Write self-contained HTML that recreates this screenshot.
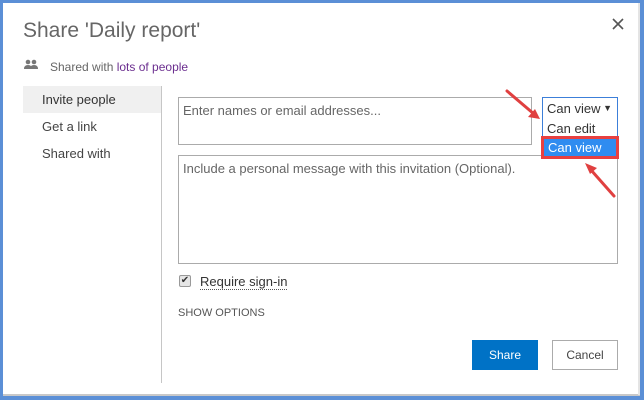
<!DOCTYPE html>
<html><head><style>
*{margin:0;padding:0;box-sizing:border-box}
body{width:644px;height:400px;overflow:hidden;background:#fff;font-family:"Liberation Sans",sans-serif;position:relative}
.a{position:absolute}
.t{color:#444;font-size:13px}
</style></head><body>
<div class="a" style="left:0;top:0;width:644px;height:400px;border:3px solid #5b8fd6;border-right-width:4px;border-bottom-width:4px"></div>
<div class="a" style="left:3px;top:394px;width:637px;height:2px;background:#c8c8c8"></div>
<div class="a" style="left:638px;top:3px;width:2px;height:392px;background:#e4e4e4"></div>
<div class="a" style="left:23px;top:19px;font-size:21px;color:#666">Share 'Daily report'</div>
<svg class="a" style="left:612px;top:18px" width="12" height="12"><path d="M1 1L11 11M11 1L1 11" stroke="#555" stroke-width="1.6"/></svg>
<svg class="a" style="left:24px;top:59px" width="14" height="11"><circle cx="4" cy="3" r="2.3" fill="#777"/><circle cx="10" cy="3" r="2.3" fill="#777"/><path d="M0 10Q0 6 4 6Q8 6 8 10ZM6 10Q6 6 10 6Q14 6 14 10Z" fill="#777"/></svg>
<div class="a" style="left:50px;top:60px;font-size:12px;color:#666">Shared with <span style="color:#6b2e8f">lots of people</span></div>
<div class="a" style="left:23px;top:86px;width:138px;height:27px;background:#f0f0f0"></div>
<div class="a" style="left:161px;top:86px;width:1px;height:297px;background:#c6c6c6"></div>
<div class="a t" style="left:42px;top:92px;font-size:13px;color:#333">Invite people</div>
<div class="a t" style="left:42px;top:119px">Get a link</div>
<div class="a t" style="left:42px;top:146px">Shared with</div>
<div class="a" style="left:178px;top:97px;width:354px;height:48px;border:1px solid #ababab"></div>
<div class="a t" style="left:183px;top:103px;color:#666">Enter names or email addresses...</div>
<div class="a" style="left:542px;top:97px;width:76px;height:23px;border:1px solid #3c7fd9;font-size:13px;color:#333;padding:3px 0 0 4px">Can view <span style="font-size:9px;position:absolute;right:5px;top:5px">▼</span></div>
<div class="a" style="left:542px;top:119px;width:76px;height:40px;border:1px solid #3c7fd9;border-top:none;background:#fff"></div>
<div class="a t" style="left:547px;top:121px;color:#333">Can edit</div>
<div class="a" style="left:178px;top:155px;width:440px;height:109px;border:1px solid #ababab"></div>
<div class="a" style="left:541px;top:136px;width:78px;height:23px;border:3px solid #e84040;background:#2f8cf0;color:#fff;font-size:13px;padding:1px 0 0 4px">Can view</div>
<div class="a t" style="left:183px;top:161px;color:#666">Include a personal message with this invitation (Optional).</div>
<svg class="a" style="left:500px;top:86px" width="45" height="42"><path d="M7 5L34 28" stroke="#e04040" stroke-width="3" stroke-linecap="round"/><path d="M40 33L28 31L35 23Z" fill="#e04040"/></svg>
<svg class="a" style="left:580px;top:155px" width="40" height="45"><path d="M34 41L11 15" stroke="#e04040" stroke-width="3" stroke-linecap="round"/><path d="M5 8L17 13L10 19Z" fill="#e04040"/></svg>
<div class="a" style="left:179px;top:275px;width:12px;height:12px;border:1px solid #999;background:#e6e6e6;border-radius:2px;font-size:10px;line-height:10px;text-align:center;color:#333">✔</div>
<div class="a t" style="left:200px;top:274px;color:#333;border-bottom:1px dotted #555;line-height:15px">Require sign-in</div>
<div class="a" style="left:178px;top:307px;font-size:11px;color:#555">SHOW OPTIONS</div>
<div class="a" style="left:472px;top:340px;width:66px;height:30px;background:#0072c6;color:#fff;font-size:12px;text-align:center;line-height:30px">Share</div>
<div class="a" style="left:552px;top:340px;width:66px;height:30px;border:1px solid #ababab;color:#444;font-size:12px;text-align:center;line-height:28px">Cancel</div>
</body></html>
